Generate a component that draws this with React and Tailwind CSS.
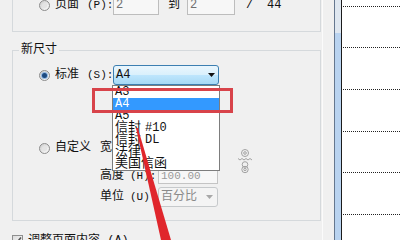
import React from "react";

function Radio({ checked }) {
  return (
    <span className="w-[11px] h-[11px] shrink-0 rounded-full border border-[#8c8c8c] bg-linear-to-br from-[#cfcfcf] to-[#fbfbfb] flex items-center justify-center">
      {checked ? (
        <span className="w-[5px] h-[5px] rounded-full bg-[#1d4a80] shadow-[0_0_0_1px_#8fb6e0]" />
      ) : (
        <span className="w-[5px] h-[5px] rounded-full bg-[#e4e4e4]" />
      )}
    </span>
  );
}

function Arrow({ color }) {
  return (
    <svg width="7" height="4" viewBox="0 0 7 4" className="shrink-0">
      <path d="M0 0 H7 L3.5 4 Z" fill={color} />
    </svg>
  );
}

function ChainIcon() {
  return (
    <svg width="16" height="26" viewBox="0 0 16 26" className="ml-[19px] shrink-0" fill="none" stroke="#a2a2a2" strokeWidth="1">
      <circle cx="8" cy="5" r="3.5" />
      <circle cx="8" cy="5" r="1.3" />
      <path d="M1 10.5 L3 12 L5 10.5 L7 12 L9 10.5 L11 12 L13 10.5 L15 12" />
      <circle cx="8" cy="16.5" r="2.8" />
      <circle cx="8" cy="21.5" r="3.2" />
      <circle cx="8" cy="21.5" r="1.2" />
    </svg>
  );
}

export default function App() {
  return (
    <div className="relative w-[400px] h-[240px] overflow-hidden flex bg-[#f0f0f0] text-[12px] leading-[12px] text-[#111] font-['Liberation_Mono','Noto_Sans_CJK_SC',monospace]">
      {/* dialog area */}
      <div className="w-[322px] shrink-0 flex flex-col">
        {/* previous group (page range) */}
        <div className="ml-[12px] w-[309px] h-[32px] shrink-0 border-x border-b border-[#d5d9dc]">
          <div className="-mt-[5px] h-[20px] flex items-center pl-[26px]">
            <Radio />
            <span className="ml-[5px] w-[32px] shrink-0">页面</span>
            <span className="w-[26px] shrink-0 text-[11px]">(P):</span>
            <div className="w-[46px] h-[20px] shrink-0 border border-[#bdbdbd] bg-[#f7f7f7] flex items-center pl-[2px] text-[#707070]">2</div>
            <span className="ml-[9px] w-[19px] shrink-0">到</span>
            <div className="w-[48px] h-[20px] shrink-0 border border-[#bdbdbd] bg-[#f7f7f7] flex items-center pl-[2px] text-[#707070]">2</div>
            <span className="ml-[11px] w-[21px] shrink-0">/</span>
            <span className="shrink-0">44</span>
          </div>
        </div>

        {/* 新尺寸 group */}
        <div className="relative mt-[18px] ml-[12px] w-[309px] h-[171px] shrink-0 border border-[#d5d9dc]">
          <span className="absolute -top-[7px] left-[6px] px-[2px] bg-[#f0f0f0]">新尺寸</span>

          {/* 标准 row */}
          <div className="mt-[14px] h-[20px] flex items-center pl-[26px]">
            <Radio checked />
            <span className="ml-[5px] w-[32px] shrink-0">标准</span>
            <span className="w-[26px] shrink-0 text-[11px]">(S):</span>
            <div className="relative w-[106px] h-[20px] shrink-0">
              <div className="w-full h-full rounded-[3px] border border-[#3c7fb1] bg-[linear-gradient(to_bottom,#eaf6fd_0%,#d9f0fc_50%,#bee6fd_50%,#a7d9f5_100%)] flex items-center justify-between pl-[2px] pr-[3px]">
                <span>A4</span>
                <Arrow color="#111" />
              </div>
              {/* open dropdown list */}
              <div className="absolute left-[-1px] top-[20px] w-[108px] bg-white border border-[#7d7d7d] flex flex-col leading-[12px] text-[#111]">
                <div className="h-[12px] pl-[2px] flex items-end overflow-hidden">A3</div>
                <div className="h-[12px] pl-[2px] flex items-center bg-[#3399ff] text-white">A4</div>
                <div className="h-[12px] pl-[2px] flex items-center">A5</div>
                <div className="h-[12px] pl-[2px] flex items-center text-[13px]">信封 <span className="text-[12px] ml-[4px]">#10</span></div>
                <div className="h-[12px] pl-[2px] flex items-center text-[13px]">信封 <span className="text-[12px] ml-[4px]">DL</span></div>
                <div className="h-[12px] pl-[2px] flex items-center text-[13px]">法律</div>
                <div className="h-[12px] pl-[2px] flex items-center text-[13px]">美国信函</div>
              </div>
            </div>
          </div>

          {/* 自定义 + 高度 rows with link icon */}
          <div className="mt-[53px] flex items-center">
            <div className="flex flex-col">
              <div className="h-[20px] flex items-center pl-[26px]">
                <Radio />
                <span className="ml-[5px] w-[45px] shrink-0">自定义</span>
                <span className="w-[30px] shrink-0">宽度</span>
                <span className="w-[28px] shrink-0 text-[11px]">(W):</span>
                <div className="w-[60px] h-[20px] shrink-0 border border-[#c4c4c4] bg-[#f7f7f7]" />
              </div>
              <div className="mt-[9px] h-[17px] flex items-center pl-[87px]">
                <span className="w-[30px] shrink-0">高度</span>
                <span className="w-[28px] shrink-0 text-[11px]">(H):</span>
                <div className="w-[60px] h-[17px] shrink-0 border border-[#c4c4c4] bg-[#f7f7f7] flex items-center pl-[2px] text-[11px] text-[#9a9a9a]">100.00</div>
              </div>
            </div>
            <ChainIcon />
          </div>

          {/* 单位 row */}
          <div className="mt-[3px] h-[20px] flex items-center pl-[87px]">
            <span className="w-[30px] shrink-0">单位</span>
            <span className="w-[28px] shrink-0 text-[11px]">(U):</span>
            <div className="w-[60px] h-[20px] shrink-0 rounded-[3px] border border-[#c6c9cb] bg-[#f4f4f4] flex items-center justify-between pl-[2px] pr-[4px] text-[#8a8a8a]">
              <span>百分比</span>
              <Arrow color="#a8a8a8" />
            </div>
          </div>
        </div>

        {/* checkbox row */}
        <div className="mt-[14px] pl-[12px] flex items-start">
          <span className="w-[11px] h-[11px] shrink-0 border border-[#8e8f8f] bg-linear-to-br from-[#dcdcdc] to-[#fafafa] flex items-center justify-center">
            <svg width="9" height="9" viewBox="0 0 9 9">
              <path d="M1 4.5 L3.5 7 L8 1.5" stroke="#555" strokeWidth="1.6" fill="none" />
            </svg>
          </span>
          <span className="ml-[5px] leading-[12px]">调整页面内容 (A)</span>
        </div>
      </div>

      {/* dialog edge */}
      <div className="w-px shrink-0 bg-[#fbfbfb]" />
      <div className="w-[11px] shrink-0" />

      {/* preview ruler strip */}
      <div className="w-px shrink-0 bg-[#65778f]" />
      <div className="w-[6px] shrink-0 flex flex-col">
        <div className="h-[33px] bg-[#dfe7f0]" />
        <div className="flex-1 bg-[#b9d3f0]" />
      </div>
      <div className="w-px shrink-0 bg-[#1b1b1b]" />

      {/* preview page */}
      <div className="flex-1 bg-white flex flex-col pl-[1px]">
        <div className="mt-[6px] border-t border-dotted border-[#222]" />
        <div className="mt-[40px] border-t border-dotted border-[#222]" />
        <div className="mt-[41px] border-t border-dotted border-[#222]" />
        <div className="mt-[41px] border-t border-dotted border-[#222]" />
        <div className="mt-[40px] border-t border-dotted border-[#222]" />
        <div className="mt-[41px] border-t border-dotted border-[#222]" />
      </div>

      {/* annotation: red highlight box */}
      <div className="absolute left-[92px] top-[88px] w-[141px] h-[25px] border-[3px] border-[#d8434a]" />

      {/* annotation: red arrow line */}
      <svg className="absolute left-0 top-0 pointer-events-none" width="400" height="240" viewBox="0 0 400 240">
        <polygon points="136,128 137.8,128 171,240 161,240" fill="#e0262c" />
      </svg>
    </div>
  );
}
